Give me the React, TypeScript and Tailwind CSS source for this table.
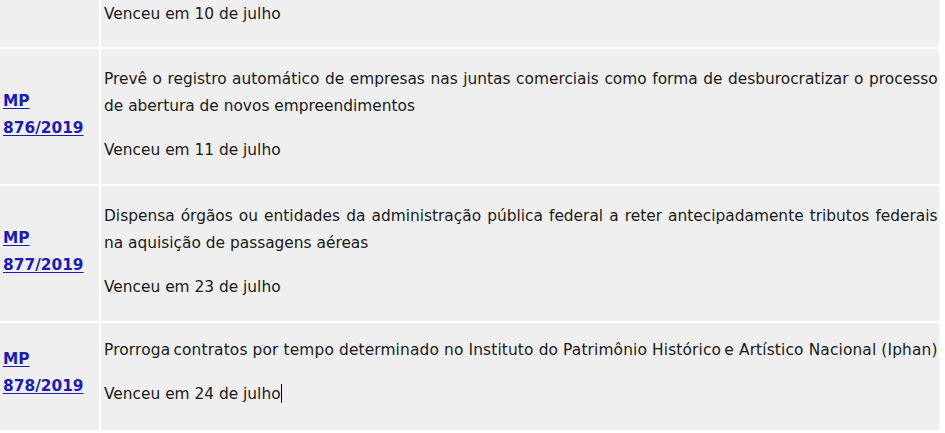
const rows = [
  {
    mp: '876/2019',
    desc: 'Prevê o registro automático de empresas nas juntas comerciais como forma de desburocratizar o processo de abertura de novos empreendimentos',
    venceu: 'Venceu em 11 de julho',
  },
  {
    mp: '877/2019',
    desc: 'Dispensa órgãos ou entidades da administração pública federal a reter antecipadamente tributos federais na aquisição de passagens aéreas',
    venceu: 'Venceu em 23 de julho',
  },
];

function MpLink({ num }: { num: string }) {
  return (
    <a href="#" className="font-bold text-[#1c1cae] underline underline-offset-2">
      MP
      <br />
      {num}
    </a>
  );
}

export default function App() {
  return (
    <div
      className="w-[945px] h-[433px] overflow-hidden bg-white text-[15.4px] leading-[27px] text-[#1a1a1a]"
      style={{ fontFamily: '"DejaVu Sans", Verdana, sans-serif' }}
    >
      <div className="w-[938px] grid grid-cols-[99px_1fr] gap-[2px]">
        {/* row cut off by scroll */}
        <div className="bg-[#efefef] h-[47px]" />
        <div className="bg-[#efefef] h-[47px] pl-[3px] pt-[1px]">
          <p>Venceu em 10 de julho</p>
        </div>

        {rows.map((r) => (
          <div key={r.mp} className="contents">
            <div className="bg-[#efefef] h-[135px] pt-[17px] pb-[20px] pl-[3px] flex items-center">
              <MpLink num={r.mp} />
            </div>
            <div className="bg-[#efefef] h-[135px] pt-[17px] pb-[20px] pl-[3px] pr-[1px] flex flex-col justify-center">
              <p className="text-justify mb-[17px]">{r.desc}</p>
              <p>{r.venceu}</p>
            </div>
          </div>
        ))}

        <div className="bg-[#efefef] h-[107px] pt-[14px] pb-[22px] pl-[3px] flex items-center">
          <MpLink num="878/2019" />
        </div>
        <div className="bg-[#efefef] h-[107px] pt-[14px] pb-[22px] pl-[3px] pr-[1px] flex flex-col justify-center">
          <p className="mb-[17px] whitespace-nowrap tracking-[0.14px]">
            Prorroga&#8201;contratos por tempo determinado no Instituto do Patrimônio Histórico&#8201;e Artístico Nacional (Iphan)
          </p>
          <p>
            Venceu em 24 de julho
            <span className="inline-block w-[1px] h-[19px] bg-black align-[-4px]" />
          </p>
        </div>
      </div>
    </div>
  );
}
